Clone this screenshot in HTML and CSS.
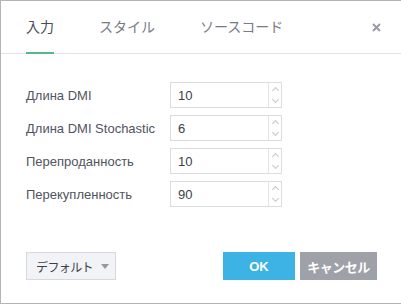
FILE: index.html
```html
<!DOCTYPE html>
<html lang="ja">
<head>
	<meta charset="UTF-8">
	<title>DMI Stochastic</title>
	<link rel="stylesheet" href="styles.css">
</head>
<body>
	<div class="dialog">
		<div class="dialog-header">
			<div class="tab active">入力</div>
			<div class="tab">スタイル</div>
			<div class="tab">ソースコード</div>
			<div class="close">
				<svg width="9" height="9" viewBox="0 0 9 9"><path d="M1 1L8 8M8 1L1 8" stroke="#9598a1" stroke-width="1.8" fill="none"/></svg>
			</div>
		</div>
		<div class="dialog-body">
			<div class="field-row">
				<label>Длина DMI</label>
				<div class="spin">
					<span class="spin-value">10</span>
					<span class="spin-btns"><span class="up"></span><span class="down"></span></span>
				</div>
			</div>
			<div class="field-row">
				<label>Длина DMI Stochastic</label>
				<div class="spin">
					<span class="spin-value">6</span>
					<span class="spin-btns"><span class="up"></span><span class="down"></span></span>
				</div>
			</div>
			<div class="field-row">
				<label>Перепроданность</label>
				<div class="spin">
					<span class="spin-value">10</span>
					<span class="spin-btns"><span class="up"></span><span class="down"></span></span>
				</div>
			</div>
			<div class="field-row">
				<label>Перекупленность</label>
				<div class="spin">
					<span class="spin-value">90</span>
					<span class="spin-btns"><span class="up"></span><span class="down"></span></span>
				</div>
			</div>
		</div>
		<div class="dialog-footer">
			<button class="btn-default">デフォルト<span class="caret"></span></button>
			<div class="footer-right">
				<button class="btn-ok">OK</button>
				<button class="btn-cancel">キャンセル</button>
			</div>
		</div>
	</div>
	<div class="chart-strip"></div>
</body>
</html>
```

FILE: styles.css
```css
* {
	box-sizing: border-box;
}
html, body {
	margin: 0;
	padding: 0;
	background: #fff;
	font-family: "Liberation Sans", "Noto Sans CJK JP", sans-serif;
	color: #4a4e57;
}
.dialog {
	width: 100%;
	height: 304px;
	border-top: 1px solid #b4b4b4;
	border-left: 1px solid #b4b4b4;
	border-bottom: 1px solid #b4b4b4;
	display: flex;
	flex-direction: column;
}
.dialog-header {
	height: 53px;
	border-bottom: 1px solid #e0e3eb;
	display: flex;
	align-items: stretch;
	padding-left: 25px;
	padding-right: 20px;
}
.tab {
	font-family: "Noto Sans CJK JP", sans-serif;
	font-size: 14px;
	color: #787b86;
	display: flex;
	align-items: center;
	padding-bottom: 1px;
	margin-right: 45px;
	margin-bottom: -1px;
	border-bottom: 2px solid transparent;
	white-space: nowrap;
}
.tab.active {
	color: #4a4e57;
	border-bottom-color: #53b987;
}
.close {
	margin-left: auto;
	display: flex;
	align-items: center;
	padding-top: 1px;
}
.dialog-body {
	padding: 28px 0 0 25px;
	display: flex;
	flex-direction: column;
	gap: 7px;
}
.field-row {
	display: flex;
	align-items: center;
}
.field-row label {
	width: 144px;
	font-size: 13px;
	color: #50545e;
}
.spin {
	width: 112px;
	height: 26px;
	border: 1px solid #dcdcdc;
	display: flex;
}
.spin-value {
	flex: 1;
	font-size: 13px;
	padding-left: 7px;
	display: flex;
	align-items: center;
	color: #3c3f46;
}
.spin-btns {
	width: 13px;
	border-left: 1px solid #e4e4e4;
	display: flex;
	flex-direction: column;
}
.spin-btns span {
	flex: 1;
	display: flex;
	align-items: center;
	justify-content: center;
}
.spin-btns span::before {
	content: "";
	width: 4px;
	height: 4px;
	border-left: 1px solid #c4c7cf;
	border-top: 1px solid #c4c7cf;
}
.spin-btns .up::before {
	transform: rotate(45deg);
	margin-top: 3px;
}
.spin-btns .down::before {
	transform: rotate(225deg);
	margin-bottom: 3px;
}
.dialog-footer {
	margin-top: auto;
	padding: 0 24px 23px 25px;
	display: flex;
	align-items: center;
}
.footer-right {
	margin-left: auto;
	display: flex;
	gap: 5px;
}
button {
	font-family: "Noto Sans CJK JP", sans-serif;
	height: 28px;
	border: 0;
	font-size: 13px;
	padding: 0;
	white-space: nowrap;
}
.btn-default {
	width: 90px;
	background: #f1f3f6;
	border: 1px solid #d6d8dd;
	color: #3c3f46;
	display: flex;
	align-items: center;
	padding-left: 9px;
	font-size: 12px;
	letter-spacing: -0.6px;
}
.caret {
	margin-left: 8px;
	width: 0;
	height: 0;
	border-left: 4px solid transparent;
	border-right: 4px solid transparent;
	border-top: 5px solid #9598a1;
}
.btn-ok {
	width: 72px;
	background: #3cb3e4;
	color: #fff;
	font-weight: bold;
	font-family: "Liberation Sans", sans-serif;
}
.btn-cancel {
	width: 77px;
	background: #9ea1a8;
	color: #fff;
	font-weight: bold;
	letter-spacing: -0.5px;
}
.chart-strip {
	height: 2px;
	background: #fff;
}
```
